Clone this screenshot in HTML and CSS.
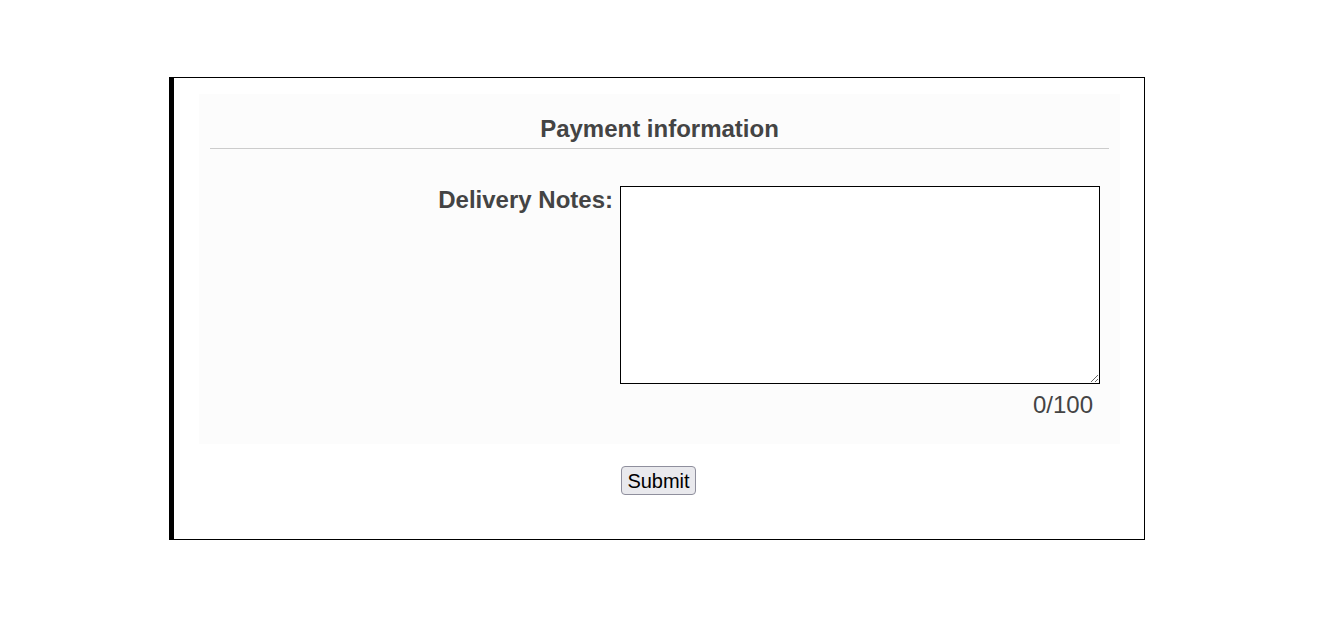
FILE: index.html
```html
<!DOCTYPE html>
<html>
<head>
<meta charset="utf-8">
<link rel="stylesheet" href="styles.css">
</head>
<body>
<form class="card">
  <div class="panel">
    <h2 class="title">Payment information</h2>
    <div class="row">
      <label class="label" for="notes">Delivery Notes:</label>
      <div class="field">
        <textarea id="notes" class="notes"></textarea>
        <div class="counter">0/100</div>
      </div>
    </div>
  </div>
  <div class="actions">
    <button type="button" class="submit">Submit</button>
  </div>
</form>
</body>
</html>
```
FILE: styles.css
```css
html, body {
  margin: 0;
  padding: 0;
  background: #ffffff;
}
body {
  font-family: "Liberation Sans", Arial, sans-serif;
  color: #444444;
  padding-top: 77px;
}
.card {
  box-sizing: border-box;
  width: 976px;
  margin-left: 169px;
  border: 1px solid #000;
  border-left: 5px solid #000;
  padding: 16px 24px 44px 25px;
}
.panel {
  background: #fcfcfc;
  padding: 21px 0 25px 0;
}
.title {
  margin: 0 11px;
  font-size: 24px;
  line-height: 28px;
  font-weight: bold;
  text-align: center;
  padding-bottom: 5px;
  border-bottom: 1px solid #cccccc;
  color: #444444;
}
.row {
  display: grid;
  grid-template-columns: 1fr 480px;
  column-gap: 7px;
  padding-right: 20px;
  margin-top: 37px;
}
.label {
  text-align: right;
  font-size: 24px;
  font-weight: bold;
  line-height: 28px;
}
.field {
  display: flex;
  flex-direction: column;
}
.notes {
  box-sizing: border-box;
  width: 480px;
  height: 198px;
  border: 1px solid #000;
  background: #fff;
  margin: 0;
  padding: 2px;
  display: block;
  font-family: "Liberation Mono", monospace;
}
.counter {
  text-align: right;
  font-size: 24px;
  line-height: 28px;
  padding-right: 7px;
  margin-top: 7px;
}
.actions {
  display: flex;
  justify-content: center;
  margin-top: 22px;
}
.submit {
  font-family: "Liberation Sans", Arial, sans-serif;
  font-size: 20px;
  line-height: 22px;
  height: 29px;
  padding: 0 5px;
  margin-right: 2px;
  color: #000;
  background: #e9e9ed;
  border: 1px solid #8f8f9d;
  border-radius: 4px;
}
```
